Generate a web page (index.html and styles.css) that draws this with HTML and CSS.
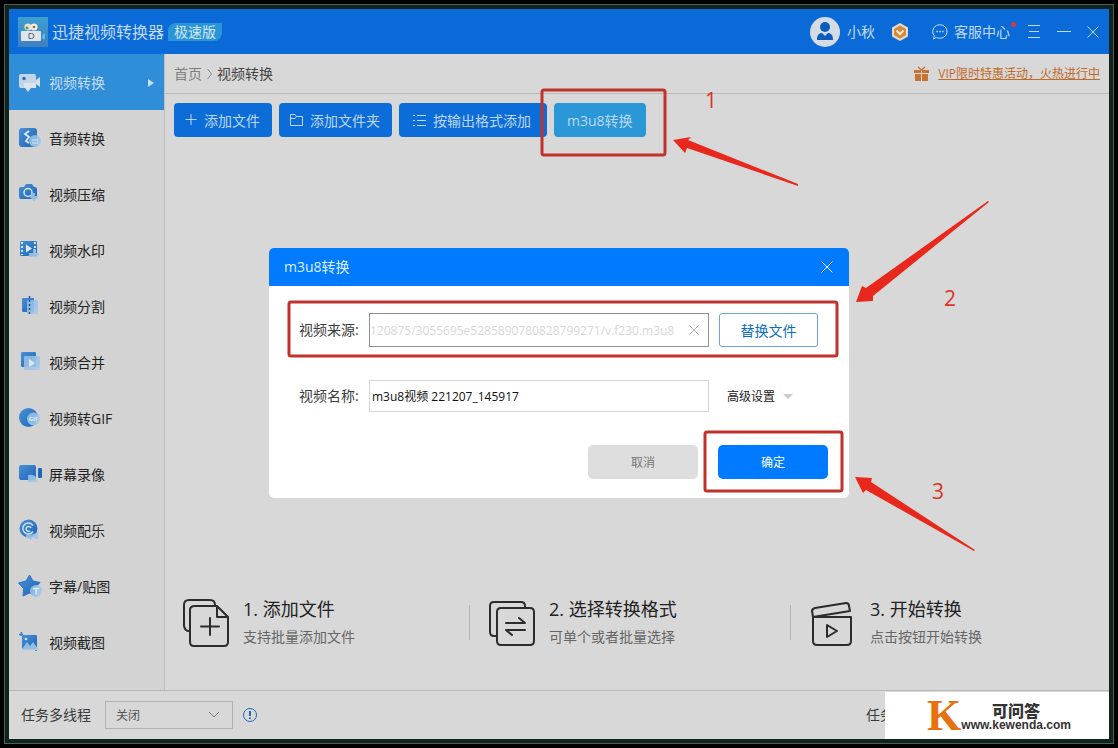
FILE: index.html
```html
<!DOCTYPE html>
<html lang="zh-CN">
<head>
<meta charset="utf-8">
<meta name="viewport" content="width=device-width, initial-scale=1">
<title>迅捷视频转换器</title>
<link rel="stylesheet" href="styles.css">
</head>
<body>
<svg width="0" height="0" class="defs" aria-hidden="true">
  <defs>
    <linearGradient id="deep" x1="0" y1="0" x2="1" y2="1"><stop offset="0" stop-color="#4a90d4"/><stop offset="1" stop-color="#1d66b8"/></linearGradient>
    <linearGradient id="pale" x1="0" y1="0" x2="1" y2="1"><stop offset="0" stop-color="#8fbce4" stop-opacity=".9"/><stop offset="1" stop-color="#a9cbe8" stop-opacity=".9"/></linearGradient>
    <linearGradient id="logo" x1="0" y1="0" x2="0" y2="1"><stop offset="0" stop-color="#3da0d0"/><stop offset="1" stop-color="#3f7fc0"/></linearGradient>
  </defs>
</svg>
<div class="screen">
<div class="app">
  <header class="titlebar">
    <svg class="logo" viewBox="0 0 30 30"><rect width="30" height="30" fill="url(#logo)"/><circle cx="10" cy="10" r="3.6" fill="#e6e3d2"/><circle cx="16" cy="10" r="3.6" fill="#f0ede6"/><circle cx="9" cy="11" r="1.5" fill="#5c9a58"/><circle cx="16" cy="10" r="1.3" fill="#a8623c"/><rect x="3" y="14" width="20" height="10" rx="1" fill="#dfe5ea"/><path d="M24 18l3-2v7l-3-2z" fill="#5cb7e6"/><path d="M11 16.500h2.500a2.500 2.500 0 010 5H11z" fill="none" stroke="#57636d"/></svg>
    <h1 class="app-name">迅捷视频转换器</h1>
    <span class="edition">极速版</span>
    <div class="account">
      <svg class="avatar" viewBox="0 0 30 30"><circle cx="15" cy="15" r="15" fill="#d5dce6"/><circle cx="15" cy="10" r="5" fill="#0b5cbc"/><path d="M7 23c0-5 2-7 5-7l3 3 3-3c3 0 5 2 5 7z" fill="#0b5cbc"/></svg>
      <span class="user">小秋</span>
      <svg class="badge" viewBox="0 0 18 18"><path d="M9 0l8 4.500v9L9 18l-8-4.500v-9z" fill="#ead9c4"/><path d="M9 2.500l6 3.400v6.400L9 15.700l-6-3.400V5.900z" fill="#d28d3c"/><path d="M5.500 7.500L9 11l3.500-3.500" fill="none" stroke="#f3e6d4" stroke-width="2"/></svg>
      <button class="service"><svg width="16" height="16" viewBox="0 0 16 16" fill="none" stroke="currentColor"><path d="M1.500 15l.8-3.200A7.200 6.800 0 118 14.300c-1.300 0-2.600-.3-3.600-.9z"/><path d="M4.500 7.500h1.500M7.300 7.500h1.500M10 7.500h1.500" stroke-width="1.500"/></svg><span>客服中心</span><i class="dot"></i></button>
    </div>
    <div class="window-controls">
      <button aria-label="菜单"><svg width="14" height="14" viewBox="0 0 14 14" stroke="currentColor"><path d="M1 .5h12M2 6.500h10M1 12.500h12"/></svg></button>
      <button aria-label="最小化"><svg width="14" height="14" viewBox="0 0 14 14" stroke="currentColor"><path d="M0 6.500h14"/></svg></button>
      <button aria-label="关闭"><svg width="12" height="12" viewBox="0 0 12 12" stroke="currentColor"><path d="M.5.500l11 11M11.500.500l-11 11"/></svg></button>
    </div>
  </header>

  <div class="workspace">
    <nav class="sidebar">
      <a class="nav-item active" href="#"><svg viewBox="0 0 22 22"><rect x="0" y="2" width="17" height="14" rx="2" fill="#c3d5e8"/><path d="M17 8l4-3v10l-4-3zM6 16h6l-3 4z" fill="#d5e0ea"/><path d="M5 11h12v5H5z" fill="#dce4ea"/><circle cx="5" cy="6.500" r="1.800" fill="#2d6fb5"/></svg><span>视频转换</span><i class="caret"></i></a>
      <a class="nav-item" href="#"><svg viewBox="0 0 22 22"><rect x="0" y="0" width="18" height="19" rx="3" fill="url(#deep)"/><path d="M10 3l-4 3 4 3-3 4 3 2" stroke="#dbe8f3" stroke-width="1.800" fill="none"/><circle cx="16" cy="13" r="6" fill="url(#pale)"/><path d="M13 12h6M13 15h6" stroke="#d5e5f2"/></svg><span>音频转换</span></a>
      <a class="nav-item" href="#"><svg viewBox="0 0 22 22"><path d="M0 5q0-2 2-2h3l2-3h6l2 3h1q2 0 2 2v10H2q-2 0-2-2z" fill="url(#deep)"/><circle cx="9" cy="8.500" r="4" fill="none" stroke="#d5e5f2" stroke-width="1.500"/><path d="M12 9h4v3h4l-5 6-5-6h2z" fill="url(#pale)"/></svg><span>视频压缩</span></a>
      <a class="nav-item" href="#"><svg viewBox="0 0 22 22"><rect x="1" y="1" width="17" height="15" rx="1" fill="url(#deep)"/><path d="M3 2v13M16 2v13" stroke="#d9e7f3" stroke-width="2" stroke-dasharray="2 2"/><path d="M7 4.500l6 4-6 4z" fill="#e0eaf3"/><path d="M14 9h3v4h3v4H10v-4h4z" fill="url(#pale)"/></svg><span>视频水印</span></a>
      <a class="nav-item" href="#"><svg viewBox="0 0 22 22"><rect x="3" y="2" width="12" height="14" rx="1" fill="url(#deep)"/><rect x="8" y="4" width="11" height="14" rx="1" fill="url(#pale)"/><path d="M10.500 0v20" stroke="#24538a" stroke-width="1.500" stroke-dasharray="2 2"/></svg><span>视频分割</span></a>
      <a class="nav-item" href="#"><svg viewBox="0 0 22 22"><rect x="2" y="0" width="15" height="15" rx="1" fill="url(#deep)"/><rect x="5" y="4" width="16" height="14" rx="1" fill="url(#pale)"/><path d="M10 7l6 4-6 4z" fill="#d9e7f3"/></svg><span>视频合并</span></a>
      <a class="nav-item" href="#"><svg viewBox="0 0 22 22"><circle cx="9.500" cy="9.500" r="9.500" fill="url(#deep)"/><circle cx="14.500" cy="11" r="6.500" fill="url(#pale)"/><text class="gif" x="14.500" y="13">GIF</text></svg><span>视频转GIF</span></a>
      <a class="nav-item" href="#"><svg viewBox="0 0 22 22"><rect x="0" y="1" width="17" height="15" rx="2" fill="url(#deep)"/><rect x="19" y="4" width="4" height="10" rx="1" fill="#1d66b8"/><path d="M9 11q9-2 9 7H9z" fill="url(#pale)"/></svg><span>屏幕录像</span></a>
      <a class="nav-item" href="#"><svg viewBox="0 0 22 22"><circle cx="9.500" cy="8.500" r="9" fill="url(#deep)"/><path d="M14 5.500a5.500 5.500 0 100 6M12 8a2.500 2.500 0 10-1 3" fill="none" stroke="#cfe0f0" stroke-width="1.500"/><path d="M7 15q8 0 12-3v7h-3l-2-2-2 3-5-3z" fill="url(#pale)"/></svg><span>视频配乐</span></a>
      <a class="nav-item" href="#"><svg viewBox="0 0 22 22"><path d="M10.500-1l3.500 6 7 1.500-5 5.500 1 7.500-6.500-2.500L4 20l.5-7.500-5-5.500L7 5z" fill="url(#deep)" stroke="#2b74c2" stroke-linejoin="round"/><circle cx="17" cy="15" r="6" fill="url(#pale)"/><path d="M14 12.500h6M17 12.500v6" stroke="#e0ebf4" stroke-width="1.500"/></svg><span>字幕/贴图</span></a>
      <a class="nav-item" href="#"><svg viewBox="0 0 22 22"><rect x="3" y="3" width="15" height="14" rx="1" fill="url(#deep)"/><path d="M0 2.500h4M2.500 0v4M17 17v2" stroke="#3b80c4" stroke-width="1.500"/><path d="M3 17l5-7 3 4 3-4 6 8H3z" fill="url(#pale)"/><circle cx="7" cy="7" r="1.300" fill="#d5e5f2"/></svg><span>视频截图</span></a>
    </nav>

    <main class="content">
      <div class="crumbs">
        <a class="home" href="#">首页</a>
        <svg width="5" height="12" viewBox="0 0 5 12" fill="none" stroke="#8c8c8c"><path d="M.5 1l4 5-4 5"/></svg>
        <span>视频转换</span>
        <a class="promo" href="#"><svg width="15" height="16" viewBox="0 0 15 16" fill="#c87434"><path d="M0 4h7v3H0zM8 4h7v3H8zM1 8h6v7H1zM8 8h6v7H8z"/><path d="M4 1l3.500 3L11 1" fill="none" stroke="#c87434" stroke-width="1.500"/></svg><span>VIP限时特惠活动，火热进行中</span></a>
      </div>
      <div class="toolbar">
        <button class="tool"><svg width="12" height="12" viewBox="0 0 12 12"><path d="M6 0v11M.5 5.500h11"/></svg>添加文件</button>
        <button class="tool"><svg width="13" height="12" viewBox="0 0 13 12"><path d="M.5.500H5l1.500 2h6v9H.5zM.5 4.500H5l1.500-2"/></svg>添加文件夹</button>
        <button class="tool list"><svg width="13" height="12" viewBox="0 0 13 12"><path d="M4 1.500h9M4 6.500h9M4 11.500h9M0 1.500h2M0 6.500h2M0 11.500h2"/></svg>按输出格式添加</button>
        <button class="tool current">m3u8转换</button>
      </div>
      <ol class="steps">
        <li class="step">
          <svg viewBox="0 0 48 48"><path d="M7 32H6q-4 0-5-5V6q0-5 5-5h21q5 0 5 5v1M12 7h22l11 11v25q0 4-4 4H11q-4 0-4-4V11q0-4 5-4zM34 7v11h11M27 19v17M18 27.500h18"/></svg>
          <div><h2>1. 添加文件</h2><p>支持批量添加文件</p></div>
        </li>
        <li class="step">
          <svg viewBox="0 0 48 48"><path d="M7 37H5q-4 0-4-4V7q0-4 4-4h27q4 0 4 4v2M12 9h29q4 0 4 4v29q0 4-4 4H12q-4 0-4-4V13q0-4 4-4zM17 24h19l-6-5M36 31H17l6 5"/></svg>
          <div><h2>2. 选择转换格式</h2><p>可单个或者批量选择</p></div>
        </li>
        <li class="step">
          <svg viewBox="0 0 48 48"><path d="M3 18h38v24q0 4-4 4H7q-4 0-4-4zM3 18L2 12q0-2 3-3l31-5q3 0 3 3l1 5zM17 26v12l10-6z"/></svg>
          <div><h2>3. 开始转换</h2><p>点击按钮开始转换</p></div>
        </li>
      </ol>
    </main>
  </div>

  <footer class="statusbar">
    <label for="threads">任务多线程</label>
    <span class="select"><select id="threads"><option>关闭</option><option>开启</option></select><svg width="12" height="8" viewBox="0 0 12 8"><path d="M1 1l5 5 5-5"/></svg></span>
    <svg class="info" width="16" height="16" viewBox="0 0 16 16"><circle cx="8" cy="8" r="6.500"/><path d="M8 4v5M8 10.500v1.500" stroke-width="2"/></svg>
    <span class="task">任务</span>
  </footer>

  <div class="backdrop">
    <section class="dialog" role="dialog" aria-labelledby="dialog-title">
      <div class="dialog-head"><h2 id="dialog-title">m3u8转换</h2><button aria-label="关闭对话框"><svg width="12" height="12" viewBox="0 0 12 12" stroke="currentColor"><path d="M.5.500l11 11M11.500.500l-11 11"/></svg></button></div>
      <form class="dialog-body">
        <div class="row">
          <label for="source">视频来源:</label>
          <span class="field source"><input id="source" type="text" value="120875/3055695e5285890780828799271/v.f230.m3u8"><button type="button" aria-label="清除"><svg width="10" height="10" viewBox="0 0 10 10" stroke="#b5b5b5"><path d="M.5.500l9 9M9.500.500l-9 9"/></svg></button></span>
          <button class="replace" type="button">替换文件</button>
        </div>
        <div class="row">
          <label for="name">视频名称:</label>
          <span class="field"><input id="name" type="text" value="m3u8视频 221207_145917"></span>
          <button class="advanced" type="button">高级设置<i></i></button>
        </div>
        <div class="actions"><button class="cancel" type="button">取消</button><button class="confirm" type="button">确定</button></div>
      </form>
    </section>
  </div>

  <div class="watermark"><span class="mark">K</span><span class="site"><b>可问答</b><span>www.kewenda.com</span></span></div>
</div>
<svg class="notes" viewBox="0 0 1118 748">
  <g fill="none" stroke="#c0332b" stroke-width="3"><rect x="542" y="90" width="123" height="65" rx="2"/><rect x="289" y="302" width="548" height="54" rx="2"/><rect x="705" y="432" width="137" height="59" rx="2"/></g>
  <g fill="#e8281c"><path d="M673 140l18-3-3 3 110 44v2l-111-38-2 5z"/><path d="M856 302l6-16 4 2 122-87 1 1-116 94v5z"/><path d="M855 477l17 1-1 4 104 68-1 1-108-61-3 3z"/></g>
  <g class="numbers"><text x="705" y="108">1</text><text x="944" y="306">2</text><text x="932" y="499">3</text></g>
</svg>
</div>
</body>
</html>
```

FILE: styles.css
```css
* { box-sizing: border-box; }
body, h1, h2, p, ol { margin: 0; padding: 0; }
body, button, input, select {
  font-family: "Open Sans", "Noto Sans CJK SC", sans-serif;
  font-size: 14px;
  font-weight: 400;
}
body { line-height: 20px; color: #222; background: #030605; }
button { padding: 0; border: 0; background: none; color: inherit; cursor: pointer; }
button svg, a svg { flex: none; }
a { color: inherit; text-decoration: none; }
svg { display: block; overflow: visible; }
.defs { position: absolute; }

.screen { position: relative; min-height: 100vh; padding: 9px; display: flex; box-shadow: inset 0 0 0 4px #000, inset 0 0 0 5px #4a5f55, inset 0 0 0 9px #10241b; }
.app { position: relative; flex: 1; min-width: 0; display: flex; flex-direction: column; background: #d8d8d8; }

.titlebar { display: flex; align-items: center; height: 45px; padding: 0 10px 0 9px; color: #c4daf2; background: #0a6bd8; }
.logo { width: 30px; height: 30px; }
.app-name { margin-left: 4px; font-size: 16px; font-weight: 400; }
.edition { margin-left: 4px; padding: 0 6px; line-height: 18px; color: #d3e8f4; background: #2a95d6; border-radius: 8px 0 8px 0; }
.account { display: flex; align-items: center; margin-left: auto; }
.avatar { width: 30px; height: 30px; }
.user { margin: 0 16px 0 7px; }
.badge { width: 18px; height: 18px; }
.service { position: relative; display: flex; align-items: center; gap: 6px; margin-left: 23px; line-height: 20px; }
.dot { position: absolute; top: 0; right: -6px; width: 5px; height: 5px; border-radius: 50%; background: #dc3838; }
.window-controls { display: flex; align-items: center; gap: 16px; margin-left: 17px; }

.workspace { flex: 1; display: flex; }
.sidebar { flex: none; width: 156px; background: #d3d3d3; border-right: 1px solid #bfbfbf; }
.nav-item { display: flex; align-items: center; gap: 8px; height: 56px; padding: 2px 10px 0; }
.nav-item svg { width: 22px; height: 22px; }
.nav-item.active { color: #c6def2; background: #308dd8; }
.caret { margin-left: auto; border: 4px solid transparent; border-left: 6px solid #c6dff2; border-right: 0; }
.gif { font-size: 6px; font-weight: 700; text-anchor: middle; fill: #dbe9f4; }

.content { flex: 1; min-width: 0; display: flex; flex-direction: column; }
.crumbs { display: flex; align-items: center; gap: 5px; height: 40px; padding: 0 9px; color: #444; border-bottom: 1px solid #b9b9b9; }
.home { color: #808080; }
.promo { display: flex; align-items: center; gap: 9px; margin-left: auto; font-size: 12px; color: #c06a28; }
.promo span { text-decoration: underline; }
.toolbar { display: flex; flex-wrap: wrap; gap: 7px; padding: 9px; }
.tool { display: flex; align-items: center; gap: 7px; height: 34px; padding: 0 12px 0 11px; border-radius: 4px; color: #bdd7f2; background: #0d6dd8; }
.tool svg { fill: none; stroke: currentColor; }
.tool.list { padding: 0 16px 0 14px; }
.tool.current { padding: 0 13px; background: #2a98d6; }

.steps { display: grid; grid-template-columns: 304fr 321fr 319fr; margin-top: auto; padding-bottom: 43px; list-style: none; }
.step { position: relative; display: flex; align-items: flex-start; gap: 12px; padding-left: 18px; }
.step + .step { padding-left: 20px; }
.step + .step::before { content: ""; position: absolute; left: 0; top: 6px; height: 35px; border-left: 1px solid #b4b4b4; }
.step > svg { width: 48px; height: 48px; fill: none; stroke: #2c2c2c; stroke-width: 2; stroke-linejoin: round; stroke-linecap: round; }
.step h2 { font-size: 18px; font-weight: 400; line-height: 20px; }
.step p { margin-top: 8px; color: #666; }

.statusbar { display: flex; align-items: center; height: 49px; padding: 0 12px; color: #3c3c3c; border-top: 1px solid #b9b9b9; }
.select { position: relative; margin: 0 9px 0 14px; }
.select select { display: block; width: 128px; height: 28px; padding: 0 10px; appearance: none; border: 1px solid #b2b2b2; border-radius: 0; background: transparent; font-size: 12px; color: #555; }
.select svg { position: absolute; right: 13px; top: 10px; fill: none; stroke: #777; pointer-events: none; }
.info { fill: none; stroke: #2468b0; }
.task { margin-left: auto; margin-right: 203px; }

.backdrop { position: absolute; inset: 0; display: flex; align-items: center; justify-content: center; padding-bottom: 2px; }
.dialog { width: 580px; border-radius: 5px; overflow: hidden; background: #fff; }
.dialog-head { display: flex; align-items: center; justify-content: space-between; height: 38px; padding: 0 16px 0 15px; color: #dceeff; background: #007bff; }
.dialog-head h2 { font-size: 14px; font-weight: 400; }
.dialog-body { padding: 27px 21px 19px 30px; }
.row { display: flex; align-items: center; margin-bottom: 33px; }
.row label { width: 70px; color: #3c3c3c; }
.field { display: flex; align-items: center; width: 340px; height: 32px; border: 1px solid #d5d5d5; }
.field input { flex: 1; min-width: 0; padding: 0 2px; border: 0; outline: 0; background: none; font-size: 12px; color: #111; }
.field.source { height: 34px; padding-right: 9px; border-color: #8e8e9c; }
.source input { padding: 0; color: #d8d8d8; }
.replace { width: 99px; height: 34px; margin-left: 10px; border: 1px solid #6fa3d4; border-radius: 3px; color: #0c70bd; }
.advanced { display: flex; align-items: center; gap: 8px; margin-left: 18px; font-size: 12px; }
.advanced i { border: 5px solid transparent; border-top-color: #ccc; border-bottom: 0; }
.actions { display: flex; justify-content: flex-end; gap: 20px; }
.actions button { width: 110px; height: 34px; border-radius: 5px; font-size: 12px; }
.cancel { color: #777; background: #dedede; }
.actions .confirm { color: #fff; background: #007bff; }

.watermark { position: absolute; right: 0; bottom: 0; display: flex; align-items: center; justify-content: center; width: 224px; height: 47px; padding-left: 4px; background: #fff; }
.mark { font: 700 44px/47px "Liberation Serif", serif; color: #e8710f; }
.site { display: flex; flex-direction: column; align-items: center; font: 700 12px/12px "Liberation Sans", sans-serif; color: #333; }
.site b { font: 900 16px/18px "Noto Sans CJK SC", sans-serif; }

.notes { position: absolute; inset: 0; width: 100%; height: 100%; pointer-events: none; }
.numbers { font-size: 21px; fill: #dc3426; }
```
